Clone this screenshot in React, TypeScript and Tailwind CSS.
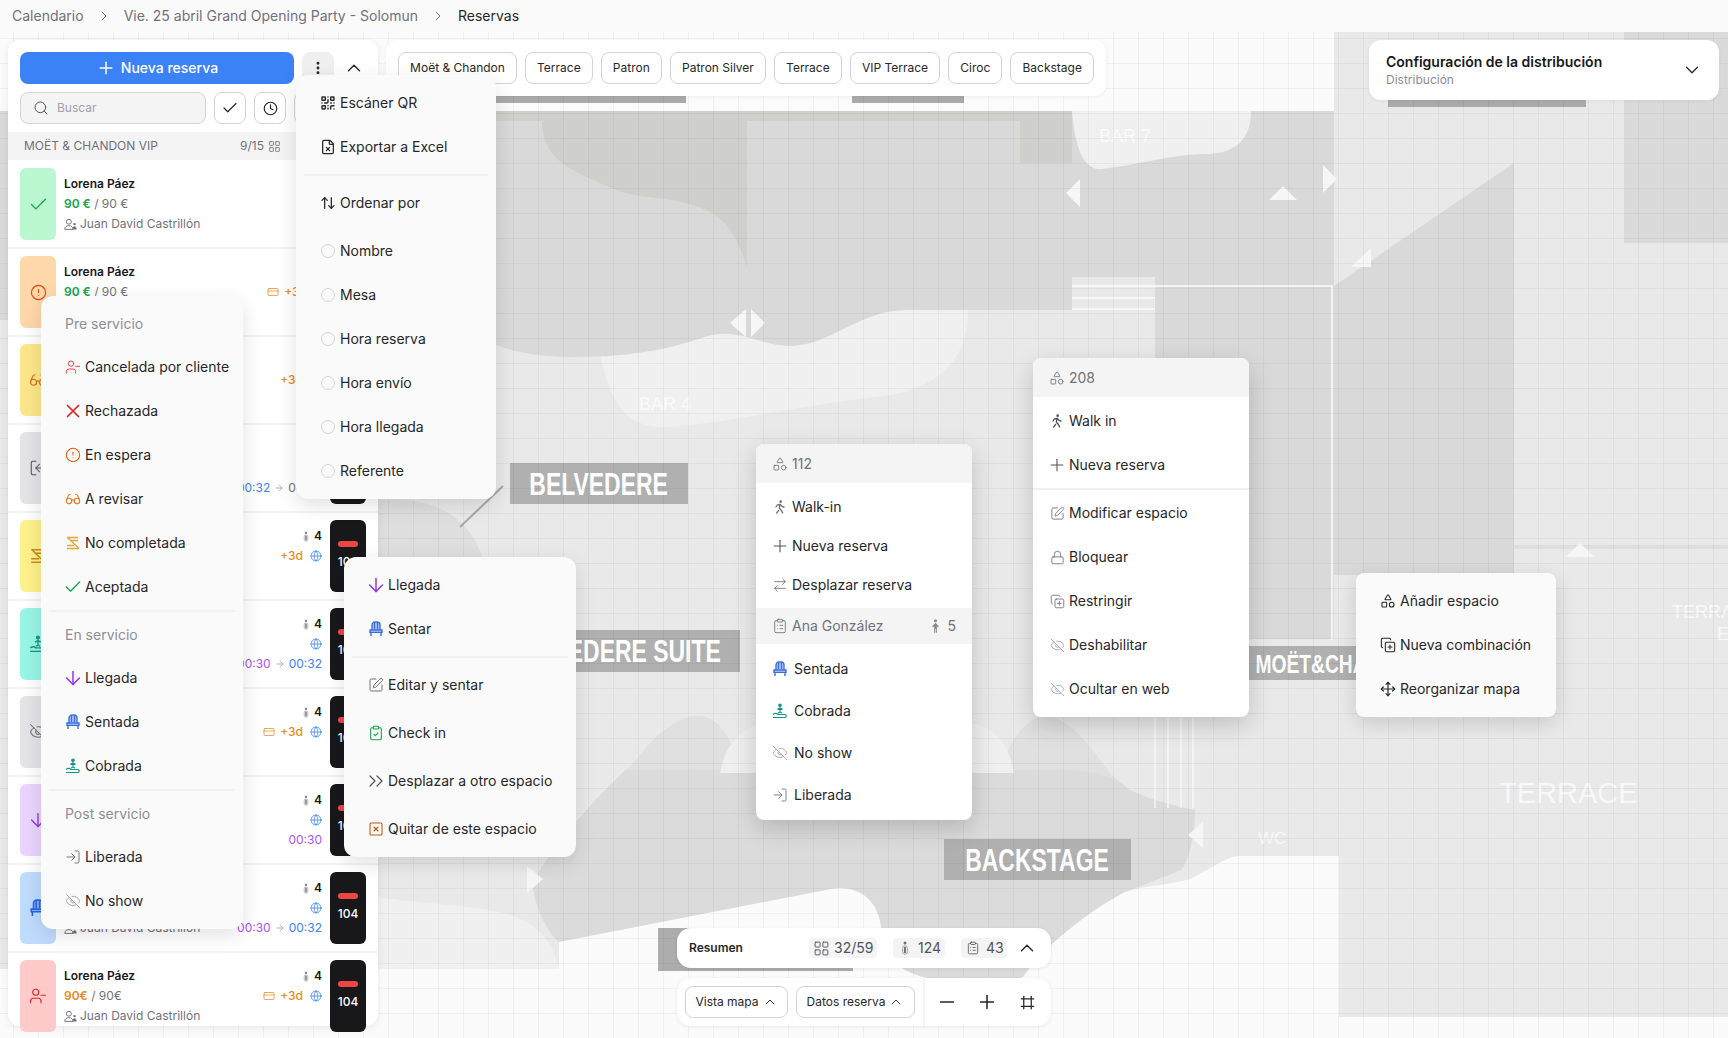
import React from "react";
import {
  ArrowDown,
  ArrowRight,
  ArrowRightLeft,
  ArrowUpDown,
  Check,
  ChevronDown,
  ChevronRight,
  ChevronUp,
  ChevronsRight,
  CircleAlert,
  ClipboardCheck,
  ClipboardList,
  Clock,
  CopyPlus,
  CreditCard,
  EllipsisVertical,
  EyeOff,
  FileX,
  Frame,
  Glasses,
  Globe,
  LayoutGrid,
  LogIn,
  Lock,
  Minus,
  Move,
  Plus,
  QrCode,
  Search,
  Shapes,
  SquarePen,
  SquareX,
  UserMinus,
  X,
} from "lucide-react";
import { TbWalk } from "react-icons/tb";

const ChairIcon = ({ className = "" }: { className?: string }) => (
  <svg viewBox="0 0 16 16" className={className} fill="none" stroke="currentColor" strokeWidth="1.4">
    <path d="M4 9V4a3 3 0 0 1 3-3h2a3 3 0 0 1 3 3v5" fill="currentColor" fillOpacity=".35" />
    <path d="M6.5 2v6M9.5 2v6" />
    <path d="M2 9h12v2.4H2z" fill="currentColor" fillOpacity=".35" />
    <path d="M3 11.4V15M13 11.4V15" />
  </svg>
);

const PayIcon = ({ className = "" }: { className?: string }) => (
  <svg viewBox="0 0 16 16" className={className} fill="none" stroke="currentColor" strokeWidth="1.2">
    <circle cx="8" cy="2.2" r="1.2" fill="currentColor" />
    <path d="M8 4v5M5.4 6.4 8 5l2.6 1.4M6 10l2-1 2 1" />
    <path d="M1 11.5c2-1.5 4-1 5 0h7c1.6 0 1.6 3 0 3H1" />
  </svg>
);

const NotDoneIcon = ({ className = "" }: { className?: string }) => (
  <svg viewBox="0 0 16 16" className={className} fill="none" stroke="currentColor" strokeWidth="1.3">
    <path d="M2 2.5h11M5 5.5h8M2 10.5h7M2 13.5h12M2.5 2.5 14 13.5" />
  </svg>
);

const PaxIcon = ({ className = "" }: { className?: string }) => (
  <svg viewBox="0 0 8 14" className={className} fill="none">
    <circle cx="4" cy="2" r="1.5" fill="#71717a" />
    <rect x="1.6" y="4.8" width="4.8" height="8.4" rx="2.4" stroke="#a1a1aa" strokeWidth="1" />
    <path d="M4 6v6" stroke="#52525b" strokeWidth="1.6" />
  </svg>
);

const PersonFill = ({ className = "" }: { className?: string }) => (
  <svg viewBox="0 0 10 16" className={className} fill="#8a8a92">
    <circle cx="5" cy="2" r="1.8" />
    <path d="M5 4.4 9 8.6 7.4 9.4 6.6 8v7.6H5.4V11h-.8v4.6H3.4V8l-.8 1.4L1 8.6z" />
  </svg>
);

const OwnerIcon = ({ className = "" }: { className?: string }) => (
  <svg viewBox="0 0 16 16" className={className} fill="none" stroke="currentColor" strokeWidth="1.2">
    <circle cx="6" cy="4.6" r="3" />
    <path d="M1 14c0-3 2-4.6 5-4.6s5 1.600 5 4.600z" />
    <circle cx="13" cy="7.500" r="1.500" fill="currentColor" stroke="none" />
    <path d="M10.800 14c0-2.400 1-3.800 2.300-3.800s2.400 1.400 2.400 3.800z" fill="currentColor" stroke="none" />
  </svg>
);

// plano del local, solo dibujo de fondo
function MapDrawing() {
  return (
    <svg viewBox="0 0 1728 1038" className="absolute left-0 top-0 h-[1038px] w-[1728px]">
      <rect x="0" y="32" width="1334" height="80" fill="#fbfbfb" />
      <rect x="1624" y="32" width="104" height="211" fill="#dadada" />
      <path
        d="M600 355C610 400 625 427 662 427C720 425 800 405 891 395C940 385 968 360 968 310H800L600 355Z"
        fill="#f0f0f0"
      />
      <path
        d="M0 111H1334V286L1514 163V575H1334V639H1155V277H1072V310H906C860 310 830 346 789 346C760 346 735 325 702 338C660 352 620 357 575 357C540 357 515 352 496 345C440 320 400 330 378 320H0Z"
        fill="#d9d9d9"
      />
      <path d="M378 111H1072V163H1020V121H747V267C735 230 725 222 712 213C680 195 640 200 616 190C570 170 542 160 542 121H378Z" fill="#cfcfcb" />
      <path d="M1072 111C1075 150 1085 170 1100 169C1140 165 1170 154 1208 154C1235 153 1251 140 1251 111Z" fill="#f0f0f0" />
      <path d="M1072 277H1155V360H1072Z" fill="#e9e9e9" />
      <path d="M1072 286H1332V640" fill="none" stroke="#fbfbfb" strokeWidth="1.600" />
      <path d="M1072 298H1155M1072 309H1155" stroke="#fbfbfb" strokeWidth="1.600" />
      <path d="M1514 547H1728" stroke="#dedede" strokeWidth="4" />
      <path d="M378 500C430 495 470 515 483 560V620H378Z" fill="#dedede" />
      <path d="M460 527 503 486" stroke="#a8a8a8" strokeWidth="2" />
      <path
        d="M532 883C560 835 610 790 640 755C660 730 680 716 697 716C715 716 730 730 742 773H1000C1010 735 1030 716 1046 716C1062 716 1078 732 1093 750C1105 768 1118 782 1130 790C1150 800 1175 806 1195 810C1195 830 1190 860 1181 870L1125 892L1060 937L1023 977C1005 985 985 980 950 980C905 980 885 960 882 935L559 942C545 930 535 905 532 883Z"
        fill="#e0e0e0"
      />
      <path
        d="M532 883C560 835 595 800 625 770H1070C1100 772 1120 780 1130 790C1150 800 1175 806 1195 810C1195 830 1190 860 1181 870L1125 892L1060 937L1023 977C1005 985 985 980 950 980C905 980 885 960 882 935L559 942C545 930 535 905 532 883Z"
        fill="#dbdbdb"
      />
      <path d="M720 773C725 745 740 730 760 724H975C1000 730 1010 750 1014 773Z" fill="#efefef" />
      <path
        d="M0 969H559V942L831 889C860 885 880 900 882 935C885 960 905 980 950 980C985 980 1005 985 1023 977C1035 960 1045 950 1060 937C1080 920 1100 905 1125 892C1145 885 1170 885 1190 879C1210 870 1225 856 1241 856H1339V1017H1728V1038H0Z"
        fill="#fbfbfb"
      />
      <path d="M378 897C430 905 480 905 510 915C540 925 555 945 559 969H378Z" fill="#f0f0f0" />
      <path d="M1155 716V808M1168 716V808M1181 716V808M1193 716V808" stroke="#f8f8f8" strokeWidth="1.400" />
      <g fill="#f6f6f6">
        <path d="M1080 179V207L1066 193Z" />
        <path d="M1269 200H1297L1283 186Z" />
        <path d="M1323 165V193L1337 179Z" />
        <path d="M1371 248V267H1351Z" />
        <path d="M746 309V337L730 323Z" />
        <path d="M751 309V337L765 323Z" />
        <path d="M1566 557H1594L1580 543 1566 557Z" />
        <path d="M1203 822V848L1188 835Z" />
        <path d="M527 866V893L543 879Z" />
      </g>
    </svg>
  );
}

function MapLabel({ className, text, size }: { className: string; text: string; size: string }) {
  return (
    <div className={`absolute flex items-center justify-center bg-[#b0b0b0] pt-[3px] ${className}`}>
      <span className={`inline-block origin-center scale-x-[.74] whitespace-nowrap font-['Liberation_Sans',sans-serif] font-bold text-white ${size}`}>
        {text}
      </span>
    </div>
  );
}

const itemClass = "flex h-11 items-center gap-1 text-sm text-[#27272a]";

function MenuDivider({ className = "" }: { className?: string }) {
  return <div className={`h-[2px] bg-[#f1f1f2] ${className}`} />;
}

function StatusMenu() {
  const head = "flex items-center pl-6 text-sm text-[#8e8e96]";
  const row = `${itemClass} pl-6`;
  return (
    <div className="absolute left-[41px] top-[296px] z-30 flex h-[633px] w-[202px] flex-col rounded-xl bg-[#fafafa] pt-[5px] shadow-[0_6px_20px_rgba(0,0,0,0.12)]">
      <div className={`${head} h-11 pt-[2px]`}>Pre servicio</div>
      <div className={row}>
        <UserMinus size={16} strokeWidth={1.5} className="text-[#ef4444]" />
        Cancelada por cliente
      </div>
      <div className={row}>
        <X size={22} strokeWidth={1.9} className="-mx-[3px] text-[#dc2626]" />
        Rechazada
      </div>
      <div className={row}>
        <CircleAlert size={16} strokeWidth={1.6} className="text-[#ea580c]" />
        En espera
      </div>
      <div className={row}>
        <Glasses size={16} strokeWidth={1.6} className="text-[#e07b1a]" />
        A revisar
      </div>
      <div className={row}>
        <NotDoneIcon className="h-4 w-4 text-[#e0a838]" />
        No completada
      </div>
      <div className={row}>
        <Check size={20} strokeWidth={1.6} className="-mx-[2px] text-[#16a34a]" />
        Aceptada
      </div>
      <MenuDivider className="mx-2 my-px" />
      <div className={`${head} h-[43px]`}>En servicio</div>
      <div className={row}>
        <ArrowDown size={22} strokeWidth={1.6} className="-mx-[3px] text-[#9333ea]" />
        Llegada
      </div>
      <div className={row}>
        <ChairIcon className="h-4 w-4 text-[#3b6fe0]" />
        Sentada
      </div>
      <div className={row}>
        <PayIcon className="h-4 w-4 text-[#14958a]" />
        Cobrada
      </div>
      <MenuDivider className="mx-2 my-px" />
      <div className={`${head} h-[43px]`}>Post servicio</div>
      <div className={row}>
        <LogIn size={16} strokeWidth={1.4} className="text-[#71717a]" />
        Liberada
      </div>
      <div className={row}>
        <EyeOff size={16} strokeWidth={1.4} className="text-[#a1a1aa]" />
        No show
      </div>
    </div>
  );
}

function SortMenu() {
  const options = ["Nombre", "Mesa", "Hora reserva", "Hora envío", "Hora llegada", "Referente"];
  const row = `${itemClass} pl-6`;
  return (
    <div className="absolute left-[296px] top-[75px] z-30 flex h-[424px] w-[200px] flex-col rounded-xl bg-[#fafafa] pt-[6px] shadow-[0_6px_20px_rgba(0,0,0,0.12)]">
      <div className={row}>
        <QrCode size={16} strokeWidth={2.2} className="text-[#27272a]" />
        Escáner QR
      </div>
      <div className={row}>
        <FileX size={16} strokeWidth={1.9} className="text-[#27272a]" />
        Exportar a Excel
      </div>
      <MenuDivider className="mx-2 my-[5px]" />
      <div className={`${row} mb-1`}>
        <ArrowUpDown size={16} strokeWidth={1.9} className="text-[#27272a]" />
        Ordenar por
      </div>
      {options.map((o) => (
        <div key={o} className="flex h-11 items-center gap-[5px] pl-[25px] text-sm text-[#27272a]">
          <span className="h-[14px] w-[14px] rounded-full border border-[#d4d4d8]" />
          {o}
        </div>
      ))}
    </div>
  );
}

function SpaceMenu() {
  const row = `${itemClass} pl-6`;
  return (
    <div className="absolute left-[344px] top-[557px] z-30 flex h-[300px] w-[232px] flex-col rounded-xl bg-[#fafafa] pt-[6px] shadow-[0_6px_20px_rgba(0,0,0,0.12)]">
      <div className={row}>
        <ArrowDown size={22} strokeWidth={1.6} className="-mx-[3px] text-[#9333ea]" />
        Llegada
      </div>
      <div className={row}>
        <ChairIcon className="h-4 w-4 text-[#3b6fe0]" />
        Sentar
      </div>
      <MenuDivider className="mx-2 my-[5px]" />
      <div className="flex flex-col gap-1">
        <div className={row}>
          <SquarePen size={16} strokeWidth={1.5} className="text-[#71717a]" />
          Editar y sentar
        </div>
        <div className={row}>
          <ClipboardCheck size={16} strokeWidth={1.6} className="text-[#16a34a]" />
          Check in
        </div>
        <div className={row}>
          <ChevronsRight size={24} strokeWidth={1.2} className="-mx-[4px] text-[#52525b]" />
          Desplazar a otro espacio
        </div>
        <div className={row}>
          <SquareX size={16} strokeWidth={1.6} className="text-[#c2560c]" />
          Quitar de este espacio
        </div>
      </div>
    </div>
  );
}

function TableMenu() {
  const row = "flex h-[39px] items-center gap-1 pl-4 text-sm text-[#27272a]";
  const row2 = "flex h-[42px] items-center gap-[6px] pl-4 text-sm text-[#27272a]";
  return (
    <div className="absolute left-[756px] top-[444px] z-20 flex h-[376px] w-[216px] flex-col rounded-lg bg-white shadow-[0_8px_24px_rgba(0,0,0,0.18)]">
      <div className="flex h-[39px] items-center gap-1 rounded-t-lg bg-[#f4f4f5] pl-4 text-sm text-[#71717a]">
        <Shapes size={16} strokeWidth={1.3} />
        112
      </div>
      <div className="pt-1">
        <div className={row}>
          <TbWalk size={16} className="text-[#71717a]" />
          Walk-in
        </div>
        <div className={row}>
          <Plus size={20} strokeWidth={1.3} className="-mx-[2px] text-[#52525b]" />
          Nueva reserva
        </div>
        <div className={row}>
          <ArrowRightLeft size={16} strokeWidth={1.3} className="text-[#71717a]" />
          Desplazar reserva
        </div>
      </div>
      <div className="mt-[4px] flex h-9 items-center gap-1 bg-[#f4f4f5] pl-4 pr-4 text-sm text-[#71717a]">
        <ClipboardList size={16} strokeWidth={1.3} />
        Ana González
        <PersonFill className="ml-auto h-[14px] w-[9px]" />
        <span className="ml-[3px]">5</span>
      </div>
      <div className="pt-1">
        <div className={row2}>
          <ChairIcon className="h-4 w-4 text-[#3b6fe0]" />
          Sentada
        </div>
        <div className={row2}>
          <PayIcon className="h-4 w-4 text-[#14958a]" />
          Cobrada
        </div>
        <div className={row2}>
          <EyeOff size={16} strokeWidth={1.3} className="text-[#a1a1aa]" />
          No show
        </div>
        <div className={row2}>
          <LogIn size={16} strokeWidth={1.3} className="text-[#71717a]" />
          Liberada
        </div>
      </div>
    </div>
  );
}

function SpaceConfigMenu() {
  const row = `${itemClass} pl-4`;
  const icon = "text-[#71717a]";
  return (
    <div className="absolute left-[1033px] top-[358px] z-20 flex h-[359px] w-[216px] flex-col rounded-lg bg-white shadow-[0_8px_24px_rgba(0,0,0,0.18)]">
      <div className="flex h-[39px] items-center gap-1 rounded-t-lg bg-[#f4f4f5] pl-4 text-sm text-[#71717a]">
        <Shapes size={16} strokeWidth={1.3} />
        208
      </div>
      <div className="pt-[2px]">
        <div className={row}>
          <TbWalk size={16} className="text-[#52525b]" />
          Walk in
        </div>
        <div className={row}>
          <Plus size={20} strokeWidth={1.3} className="-mx-[2px] text-[#52525b]" />
          Nueva reserva
        </div>
      </div>
      <MenuDivider className="my-px" />
      <div className={row}>
        <SquarePen size={15} strokeWidth={1.4} className={`mx-[0.5px] ${icon}`} />
        Modificar espacio
      </div>
      <div className={row}>
        <Lock size={15} strokeWidth={1.4} className={`mx-[0.5px] ${icon}`} />
        Bloquear
      </div>
      <div className={row}>
        <CopyPlus size={15} strokeWidth={1.4} className={`mx-[0.5px] ${icon}`} />
        Restringir
      </div>
      <div className={row}>
        <EyeOff size={15} strokeWidth={1.4} className="mx-[0.5px] text-[#a1a1aa]" />
        Deshabilitar
      </div>
      <div className={row}>
        <EyeOff size={15} strokeWidth={1.4} className="mx-[0.5px] text-[#a1a1aa]" />
        Ocultar en web
      </div>
    </div>
  );
}

function MapMenu() {
  const row = `${itemClass} pl-6`;
  return (
    <div className="absolute left-[1356px] top-[573px] z-20 flex h-[144px] w-[200px] flex-col rounded-lg bg-[#fafafa] pt-[6px] shadow-[0_6px_20px_rgba(0,0,0,0.14)]">
      <div className={row}>
        <Shapes size={16} strokeWidth={1.6} className="text-[#27272a]" />
        Añadir espacio
      </div>
      <div className={row}>
        <CopyPlus size={16} strokeWidth={1.6} className="text-[#27272a]" />
        Nueva combinación
      </div>
      <div className={row}>
        <Move size={16} strokeWidth={1.8} className="text-[#27272a]" />
        Reorganizar mapa
      </div>
    </div>
  );
}

type Booking = {
  tone: string;
  icon: React.ReactNode;
  card?: boolean;
  extra?: boolean;
  from?: string;
  fromTone?: string;
  to?: string;
  toTone?: string;
  paidTone?: string;
  paid?: string;
  total?: string;
  side?: boolean;
  nudge?: boolean;
};

const bookings: Booking[] = [
  { tone: "bg-[#bbf7d0]", icon: <Check size={21} strokeWidth={1.5} className="text-[#16a34a]" /> },
  { tone: "bg-[#fed7aa]", icon: <CircleAlert size={17} strokeWidth={1.6} className="text-[#dc4a12]" />, card: true, extra: true, side: true, nudge: true },
  { tone: "bg-[#fde68a]", icon: <Glasses size={18} strokeWidth={1.6} className="text-[#d9731a]" />, extra: true, side: true },
  { tone: "bg-[#e4e4e7]", icon: <LogIn size={18} strokeWidth={1.4} className="rotate-180 text-[#52525b]" />, from: "00:32", fromTone: "text-[#3b82f6]", to: "00:34", toTone: "text-[#71717a]", side: true },
  { tone: "bg-[#fef08a]", icon: <NotDoneIcon className="h-[18px] w-[18px] text-[#c98a1a]" />, extra: true, side: true },
  { tone: "bg-[#99f6e4]", icon: <PayIcon className="h-[18px] w-[18px] text-[#14958a]" />, from: "00:30", fromTone: "text-[#a855f7]", to: "00:32", toTone: "text-[#3b82f6]", side: true },
  { tone: "bg-[#e4e4e7]", icon: <EyeOff size={18} strokeWidth={1.4} className="text-[#71717a]" />, card: true, extra: true, side: true },
  { tone: "bg-[#e9d5ff]", icon: <ArrowDown size={22} strokeWidth={1.5} className="text-[#9333ea]" />, to: "00:30", toTone: "text-[#a855f7]", side: true },
  { tone: "bg-[#bfdbfe]", icon: <ChairIcon className="h-[18px] w-[18px] text-[#2563eb]" />, from: "00:30", fromTone: "text-[#a855f7]", to: "00:32", toTone: "text-[#3b82f6]", side: true },
  { tone: "bg-[#fecaca]", icon: <UserMinus size={18} strokeWidth={1.5} className="text-[#dc2626]" />, card: true, extra: true, side: true, paidTone: "text-[#ea8a1e]", paid: "90€", total: "90€" },
];

function BookingRow({ b, index }: { b: Booking; index: number }) {
  const last = index === bookings.length - 1;
  const spacing = index === 0 ? "h-[89px] pt-2" : "h-[88px] pt-[7px]";
  return (
    <div className={`flex shrink-0 gap-2 pl-3 pr-3 ${spacing} ${last ? "" : "border-b-2 border-[#f4f4f5]"}`}>
      <div className={`flex h-[72px] w-9 shrink-0 items-center justify-center rounded-md ${b.tone}`}>{b.icon}</div>
      <div className="flex flex-1 flex-col pt-[6px] text-xs">
        <div className="flex h-5 items-center font-semibold text-[#18181b]">Lorena Páez</div>
        <div className="flex h-5 items-center text-[#71717a]">
          <span className={`font-semibold ${b.paidTone ?? "text-[#16a34a]"}`}>{b.paid ?? "90 €"}</span>
          <span>&nbsp;/ {b.total ?? "90 €"}</span>
        </div>
        <div className="flex h-5 items-center gap-[3px] text-[#71717a]">
          <OwnerIcon className="h-[13px] w-[13px] text-[#71717a]" />
          Juan David Castrillón
        </div>
      </div>
      {b.side && (
        <div className="flex w-[110px] flex-col items-end pt-[6px] text-xs">
          <div className="flex h-5 items-center gap-[5px] font-semibold text-[#18181b]">
            <PaxIcon className="h-[13px] w-[6px]" />4
          </div>
          <div className={`flex h-5 items-center gap-[5px] ${b.nudge ? "translate-x-1" : ""}`}>
            {b.card && <CreditCard size={12} strokeWidth={1.5} className="text-[#ea8a1e]" />}
            {b.extra && <span className="mr-[2px] font-medium text-[#ea8a1e]">+3d</span>}
            <Globe size={12} strokeWidth={1.6} className="text-[#3b82f6]" />
          </div>
          <div className="flex h-5 items-center gap-1">
            {b.from && <span className={b.fromTone}>{b.from}</span>}
            {b.from && <ArrowRight size={10} className="text-[#a1a1aa]" />}
            {b.to && <span className={b.toTone}>{b.to}</span>}
          </div>
        </div>
      )}
      <div className="flex h-[72px] w-9 shrink-0 flex-col items-center rounded-md bg-[#18181b] pt-[21px]">
        <div className="h-[6px] w-5 rounded-full bg-[#ef4444]" />
        <span className="mt-[7px] text-xs font-medium text-white">104</span>
      </div>
    </div>
  );
}

function ReservationsPanel() {
  return (
    <div className="absolute left-2 top-10 z-10 flex h-[986px] w-[370px] flex-col rounded-xl bg-white shadow-[0_2px_8px_rgba(0,0,0,0.08)]">
      <div className="flex flex-col gap-2 pl-3 pr-2 pt-3">
        <div className="flex items-center">
          <button className="flex h-8 w-[274px] shrink-0 items-center justify-center gap-[5px] rounded-lg bg-[#3b82f6] text-sm font-medium text-white">
            <Plus size={20} strokeWidth={1.8} />
            Nueva reserva
          </button>
          <button className="ml-2 flex h-8 w-8 shrink-0 items-center justify-center rounded-lg bg-[#f0f0f1] text-[#27272a]">
            <EllipsisVertical size={16} strokeWidth={2.4} />
          </button>
          <button className="flex h-8 w-10 shrink-0 items-center justify-center text-[#27272a]">
            <ChevronUp size={22} strokeWidth={1.5} />
          </button>
        </div>
        <div className="flex items-center gap-2">
          <div className="flex h-8 w-[186px] shrink-0 items-center gap-2 rounded-lg border border-[#d4d4d8] bg-[#f4f4f5] pl-3 text-xs text-[#a1a1aa]">
            <Search size={16} strokeWidth={1.5} className="text-[#52525b]" />
            Buscar
          </div>
          <button className="flex h-8 w-8 items-center justify-center rounded-lg border border-[#d4d4d8] text-[#27272a]">
            <Check size={18} strokeWidth={1.6} />
          </button>
          <button className="flex h-8 w-8 items-center justify-center rounded-lg border border-[#d4d4d8] text-[#27272a]">
            <Clock size={15} strokeWidth={1.9} />
          </button>
          <button className="flex h-8 w-8 items-center justify-center rounded-lg border border-[#d4d4d8] text-[#27272a]">
            <Clock size={15} strokeWidth={1.9} />
          </button>
        </div>
      </div>
      <div className="mt-2 flex h-7 shrink-0 items-center justify-between bg-[#f4f4f5] pl-4 pr-[97px] text-xs text-[#71717a]">
        <span>MOËT &amp; CHANDON VIP</span>
        <span className="flex items-center gap-1">
          9/15
          <LayoutGrid size={13} strokeWidth={1.6} />
        </span>
      </div>
      <div className="flex flex-col">
        {bookings.map((b, i) => (
          <BookingRow key={i} b={b} index={i} />
        ))}
      </div>
    </div>
  );
}

function Chips() {
  const names = ["Moët & Chandon", "Terrace", "Patron", "Patron Silver", "Terrace", "VIP Terrace", "Ciroc", "Backstage"];
  return (
    <div className="absolute left-[386px] top-10 z-10 flex h-14 items-center gap-2 rounded-xl bg-white px-3 shadow-[0_1px_4px_rgba(0,0,0,0.06)]">
      {names.map((n, i) => (
        <div key={i} className="flex h-8 items-center rounded-lg border border-[#d4d4d8] px-[11.1px] text-xs text-[#27272a]">
          {n}
        </div>
      ))}
    </div>
  );
}

function SummaryBar() {
  const pill = "flex h-5 items-center rounded bg-[#f4f4f5] text-sm text-[#52525b]";
  return (
    <>
      <div className="absolute left-[677px] top-[928px] z-10 flex h-10 w-[374px] items-center rounded-[14px] bg-white pl-3 pr-[13px] shadow-[0_1px_4px_rgba(0,0,0,0.08)]">
        <span className="text-xs font-semibold text-[#27272a]">Resumen</span>
        <div className={`ml-auto w-[68px] gap-1 pl-1 ${pill}`}>
          <LayoutGrid size={17} strokeWidth={1.3} />
          32/59
        </div>
        <div className={`ml-4 w-[52px] gap-[9px] pl-2 ${pill}`}>
          <PaxIcon className="h-[14px] w-2" />
          124
        </div>
        <div className={`ml-4 w-[46px] gap-[6px] pl-[5px] ${pill}`}>
          <ClipboardList size={14} strokeWidth={1.4} />
          43
        </div>
        <ChevronUp size={22} strokeWidth={1.5} className="ml-[9px] text-[#27272a]" />
      </div>
      <div className="absolute left-[677px] top-[978px] z-10 flex h-12 w-[374px] items-center rounded-[14px] bg-white shadow-[0_1px_4px_rgba(0,0,0,0.08)]">
        <div className="flex w-[246px] items-center gap-2 pl-2">
          <button className="flex h-8 w-[103px] items-center justify-center gap-[3px] rounded-lg border border-[#d4d4d8] text-xs text-[#27272a]">
            Vista mapa
            <ChevronUp size={16} strokeWidth={1.4} />
          </button>
          <button className="flex h-8 w-[119px] items-center justify-center gap-[3px] rounded-lg border border-[#d4d4d8] text-xs text-[#27272a]">
            Datos reserva
            <ChevronUp size={16} strokeWidth={1.4} />
          </button>
        </div>
        <div className="h-12 w-[2px] bg-[#f4f4f5]" />
        <div className="flex items-center pl-[2px] text-[#27272a]">
          <div className="flex h-8 w-10 items-center justify-center">
            <Minus size={22} strokeWidth={1.7} />
          </div>
          <div className="flex h-8 w-10 items-center justify-center">
            <Plus size={22} strokeWidth={1.7} />
          </div>
          <div className="flex h-8 w-10 items-center justify-center">
            <Frame size={15} strokeWidth={2} />
          </div>
        </div>
      </div>
    </>
  );
}

export default function App() {
  const mapText = "absolute font-['Liberation_Sans',sans-serif] whitespace-nowrap text-white/70";
  return (
    <div className="relative h-[1038px] w-[1728px] overflow-hidden bg-[#e9e9e9] font-[Inter,sans-serif]">
      <MapDrawing />

      {/* carteles del plano */}
      <div className="absolute left-[496px] top-[60px] h-[43px] w-[190px] bg-[#aaaaaa]" />
      <div className="absolute left-[852px] top-[60px] h-[43px] w-[112px] bg-[#aaaaaa]" />
      <div className="absolute left-[1388px] top-[60px] h-[47px] w-[198px] bg-[#aaaaaa]" />
      <MapLabel className="left-[510px] top-[463px] h-[41px] w-[178px]" text="BELVEDERE" size="text-[31px]" />
      <MapLabel className="left-[490px] top-[630px] h-[42px] w-[250px]" text="BELVEDERE SUITE" size="text-[31px]" />
      <MapLabel className="left-[944px] top-[839px] h-[41px] w-[187px]" text="BACKSTAGE" size="text-[31px]" />
      <MapLabel className="left-[1249px] top-[646px] h-[34px] w-[181px]" text="MOËT&CHANDON" size="text-[26px]" />
      <div className="absolute left-[658px] top-[928px] h-[43px] w-[195px] bg-[#adadad]" />
      <span className={`${mapText} left-[639px] top-[390px] text-lg`}>BAR 4</span>
      <span className={`${mapText} left-[1099px] top-[122px] text-lg`}>BAR 7</span>
      <span className={`${mapText} left-[1258px] top-[826px] text-[17px]`}>WC</span>
      <span className={`${mapText} left-[1499px] top-[772px] text-[29px]`}>TERRACE</span>
      <span className={`${mapText} left-[1672px] top-[598px] text-lg`}>TERRACE</span>
      <span className={`${mapText} left-[1717px] top-[620px] text-lg`}>EXT</span>

      {/* cuadrícula sobre el plano */}
      <div className="absolute inset-x-0 bottom-0 top-8 bg-[linear-gradient(to_right,rgba(0,0,0,0.045)_1px,transparent_1px),linear-gradient(to_bottom,rgba(0,0,0,0.045)_1px,transparent_1px)] bg-[size:25px_25px] bg-[position:13px_6px]" />

      <div className="absolute left-0 right-0 top-0 z-10 flex h-8 items-center gap-3 bg-[#fafafa] pl-3 text-sm text-[#71717a]">
        <span>Calendario</span>
        <ChevronRight size={16} strokeWidth={1.4} />
        <span>Vie. 25 abril Grand Opening Party - Solomun</span>
        <ChevronRight size={16} strokeWidth={1.4} />
        <span className="text-[#27272a]">Reservas</span>
      </div>

      <ReservationsPanel />
      <Chips />

      <div className="absolute left-[1369px] top-10 z-10 flex h-[60px] w-[350px] items-center justify-between rounded-xl bg-white pl-[17px] pr-4 shadow-[0_1px_4px_rgba(0,0,0,0.06)]">
        <div className="flex flex-col">
          <span className="text-sm leading-5 font-semibold text-[#18181b]">Configuración de la distribución</span>
          <span className="text-xs leading-4 text-[#8e8e96]">Distribución</span>
        </div>
        <ChevronDown size={22} strokeWidth={1.4} className="text-[#27272a]" />
      </div>

      <TableMenu />
      <SpaceConfigMenu />
      <MapMenu />
      <SummaryBar />
      <StatusMenu />
      <SortMenu />
      <SpaceMenu />
    </div>
  );
}
